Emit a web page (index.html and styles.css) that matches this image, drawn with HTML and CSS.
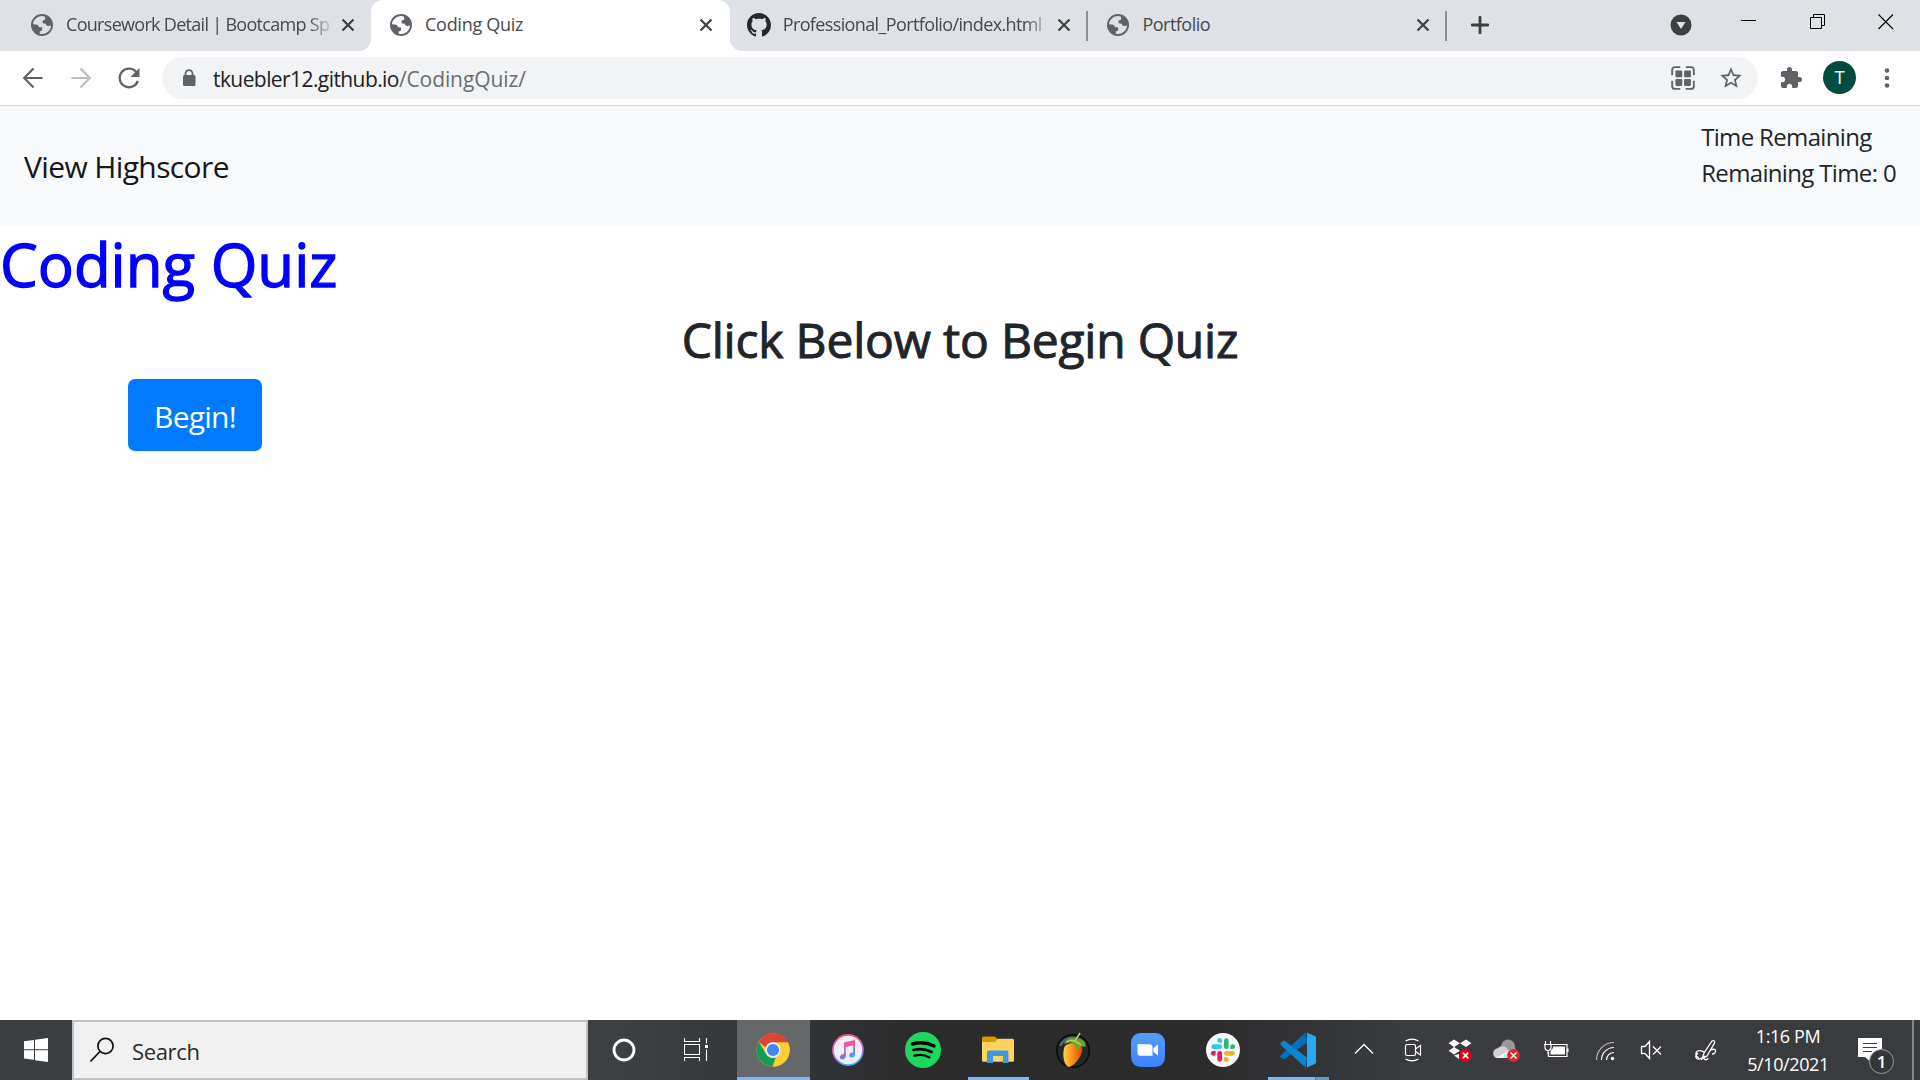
FILE: index.html
```html
<!DOCTYPE html>
<html lang="en">
<head>
<meta charset="utf-8">
<title>Coding Quiz</title>
<link rel="stylesheet" href="styles.css">
</head>
<body>
<svg class="defs" aria-hidden="true">
  <symbol id="globe" viewBox="0 0 24 24">
    <circle cx="12" cy="12" r="11" fill="#5f6368"/>
    <path fill="var(--tab-bg)" d="M11 3.200C6.600 3.700 3.200 7 3 11.300L6 11.600c1.800.1 2.600.9 2.800 2.300l3.400.5-.1 3.200-2.300.8v2.400c5.300 1.500 11-2.500 11.200-8.200l-2.600.4c-1.700.1-2.400-.9-2.800-2.400-1.700.2-3-.3-3.200-1.900.1-1.400 1.200-1.900 2.700-2V3.700C13.700 3.200 12.500 3 11 3.200z"/>
  </symbol>
  <symbol id="cross" viewBox="0 0 14 14"><path d="M1.500 1.500l11 11M12.500 1.500l-11 11" stroke="#3c4043" stroke-width="2.200"/></symbol>
</svg>

<header class="tabs">
  <div class="tab"><svg class="fav"><use href="#globe"/></svg><span class="title fade t-course">Coursework Detail | Bootcamp Sp</span><svg class="x"><use href="#cross"/></svg></div>
  <div class="tab active"><svg class="fav"><use href="#globe"/></svg><span class="title t-coding">Coding Quiz</span><svg class="x"><use href="#cross"/></svg></div>
  <div class="tab ruled"><svg class="fav" viewBox="0 0 16 16"><path fill="#24292e" d="M8 0C3.580 0 0 3.580 0 8c0 3.540 2.290 6.530 5.470 7.590.4.070.55-.17.55-.38 0-.19-.01-.82-.01-1.490-2.010.37-2.530-.49-2.690-.94-.09-.23-.48-.94-.82-1.130-.28-.15-.68-.52-.01-.53.63-.01 1.080.58 1.230.82.720 1.210 1.870.87 2.330.66.070-.52.280-.87.510-1.070-1.780-.2-3.640-.89-3.640-3.950 0-.87.310-1.590.820-2.150-.08-.2-.36-1.020.080-2.120 0 0 .67-.21 2.200.82.640-.18 1.320-.27 2-.27s1.360.09 2 .27c1.530-1.040 2.200-.82 2.200-.82.440 1.100.160 1.920.080 2.120.510.560.820 1.270.820 2.150 0 3.070-1.870 3.750-3.650 3.950.290.250.540.730.540 1.480 0 1.070-.01 1.930-.01 2.200 0 .21.150.460.550.380A8.010 8.010 0 0 0 16 8c0-4.420-3.580-8-8-8z"/></svg><span class="title fade t-prof">Professional_Portfolio/index.html</span><svg class="x"><use href="#cross"/></svg></div>
  <div class="tab ruled"><svg class="fav"><use href="#globe"/></svg><span class="title t-port">Portfolio</span><svg class="x"><use href="#cross"/></svg></div>
  <svg class="plus" viewBox="0 0 18 18"><path d="M9 1v16M1 9h16" stroke="#3c4043" stroke-width="2.800" stroke-linecap="round"/></svg>
  <div class="window-controls">
    <svg class="search-tabs" viewBox="0 0 22 22"><circle cx="11" cy="11" r="10.500" fill="#3c4043"/><path d="M6.500 8h9L11 15z" fill="#dee1e6"/></svg>
    <svg class="wc" viewBox="0 0 16 16"><path d="M0 6.500h15" stroke="#000"/></svg>
    <svg class="wc" viewBox="0 0 16 16"><path d="M.5 3.500h11v11H.5zM3.500 3.500v-3h11v11h-3" fill="none" stroke="#000"/></svg>
    <svg class="wc" viewBox="0 0 16 16"><path d="M.5.5l14.500 14.500M15 .5L.5 15" stroke="#000" stroke-width="1.100"/></svg>
  </div>
</header>

<nav class="toolbar">
  <svg class="nav" viewBox="0 0 24 24"><path d="M21.500 12H3.500M12.500 2.500L3.200 12l9.300 9.500" fill="none" stroke="#5f6368" stroke-width="2.200"/></svg>
  <svg class="nav" viewBox="0 0 24 24"><path d="M2.500 12h18M11.500 2.500l9.300 9.500-9.300 9.500" fill="none" stroke="#babcbe" stroke-width="2.200"/></svg>
  <svg class="nav" viewBox="0 0 24 24"><path d="M19.800 6.800A9.300 9.300 0 1 0 20.800 15" fill="none" stroke="#5f6368" stroke-width="2.300"/><path d="M22.500 2v9h-9z" fill="#5f6368"/></svg>
  <div class="omnibox">
    <svg class="lock" viewBox="0 0 14 18"><path d="M3.500 7V4.600a3.500 3.500 0 0 1 7 0V7" fill="none" stroke="#5f6368" stroke-width="1.800"/><rect x="1" y="6" width="12.500" height="11" rx="1.500" fill="#5f6368"/></svg>
    <span class="url">tkuebler12.github.io<span>/CodingQuiz/</span></span>
    <svg class="qr" viewBox="0 0 24 24"><path d="M9.500 2H4.500A2.500 2.500 0 0 0 2 4.500v5M14.500 2h5A2.500 2.500 0 0 1 22 4.500v5M9.500 22h-5A2.500 2.500 0 0 1 2 19.500v-5M14.500 22h5a2.500 2.500 0 0 0 2.500-2.500v-5" fill="none" stroke="#5f6368" stroke-width="1.700"/><g fill="#5f6368"><rect x="5" y="5" width="6.300" height="6.300" rx="1"/><rect x="13" y="5" width="6.300" height="6.300" rx="1"/><rect x="5" y="13" width="6.300" height="6.300" rx="1"/><rect x="13" y="13" width="6.300" height="6.300" rx="1"/></g></svg>
    <svg class="star" viewBox="0 0 24 24"><path fill="#5f6368" d="M22 9.240l-7.190-.62L12 2 9.190 8.630 2 9.240l5.460 4.730L5.820 21 12 17.270 18.180 21l-1.630-7.030L22 9.240zM12 15.400l-3.760 2.270 1-4.280-3.320-2.880 4.380-.38L12 6.100l1.710 4.040 4.380.38-3.320 2.880 1 4.280L12 15.400z"/></svg>
  </div>
  <svg class="puzzle" viewBox="0 0 24 24"><path fill="#5f6368" d="M20.500 11H19V7c0-1.100-.9-2-2-2h-4V3.500a2.500 2.500 0 0 0-5 0V5H4c-1.100 0-1.990.9-1.990 2v3.800H3.500c1.490 0 2.700 1.210 2.700 2.700s-1.210 2.700-2.700 2.700H2V20c0 1.100.9 2 2 2h3.800v-1.500c0-1.490 1.210-2.700 2.700-2.700s2.700 1.210 2.700 2.700V22H17c1.100 0 2-.9 2-2v-4h1.500a2.500 2.500 0 0 0 0-5z"/></svg>
  <span class="avatar">T</span>
  <svg class="dots" viewBox="0 0 6 22"><g fill="#5f6368"><circle cx="3" cy="3.500" r="2.300"/><circle cx="3" cy="11" r="2.300"/><circle cx="3" cy="18.500" r="2.300"/></g></svg>
</nav>

<main>
  <section class="navbar">
    <a class="brand">View Highscore</a>
    <div class="timer"><div>Time Remaining</div><div>Remaining Time: 0</div></div>
  </section>
  <h1>Coding Quiz</h1>
  <h2>Click Below to Begin Quiz</h2>
  <button class="begin">Begin!</button>
</main>

<footer class="taskbar">
  <div class="start"><svg width="24" height="24" viewBox="0 0 24 24"><path fill="#fff" d="M0 3.300L10 1.900V11.300H0zM11 1.700L24 0v11.300H11zM0 12.300h10v9.500L0 20.500zM11 12.300h13V24l-13-1.800z"/></svg></div>
  <div class="search"><svg width="26" height="26" viewBox="0 0 26 26"><g fill="none" stroke="#111" stroke-width="1.700"><circle cx="15.500" cy="9" r="7.600"/><path d="M10 14.500L.5 24.500"/></g></svg><span class="search-label">Search</span></div>
  <div class="sys"><svg width="24" height="24" viewBox="0 0 24 24"><circle cx="12" cy="12" r="10" fill="none" stroke="#fff" stroke-width="2.800"/></svg></div>
  <div class="sys"><svg width="24" height="24" viewBox="0 0 24 24"><g fill="none" stroke="#fff" stroke-width="1.100"><path d="M.5 0v3.500h15V0M.5 6.500h15v10H.5zM.5 23v-3.500h15V23M22.500 0v5.500M22.500 11.500V23"/></g><path fill="#fff" d="M21 7h3v3h-3z"/></svg></div>
  <div class="apps">
    <div class="app on"><svg width="34" height="34" viewBox="0 0 34 34"><circle cx="17" cy="17" r="16.500" fill="#fc3"/><path fill="#db4437" d="M2.700 8.800A16.500 16.500 0 0 1 32 9.500H17a7.500 7.500 0 0 0-7 5z"/><path fill="#fc3" d="M17 9.500h15A16.500 16.500 0 0 1 16.500 33.500l7-12.800z"/><path fill="#0f9d58" d="M2.700 8.800l7.600 12.500a7.800 7.800 0 0 0 9.500 3.200l-3.300 9A16.500 16.500 0 0 1 2.700 8.800z"/><circle cx="17" cy="17" r="7.700" fill="#f1f1f1"/><circle cx="17" cy="17" r="6.100" fill="#4285f4"/></svg></div>
    <div class="app"><svg width="32" height="32" viewBox="0 0 32 32"><defs><linearGradient id="it" x1=".2" y1="0" x2=".6" y2="1"><stop offset="0" stop-color="#ff4b5c"/><stop offset=".45" stop-color="#e05ad0"/><stop offset=".75" stop-color="#7a6cf5"/><stop offset="1" stop-color="#2cc8f8"/></linearGradient></defs><circle cx="16" cy="16" r="15.900" fill="url(#it)"/><circle cx="16" cy="16" r="14.300" fill="#f0eff4"/><path fill="url(#it)" d="M12 8.500L23 6v14.500c0 2-1.500 3.300-3.200 3.300-3.700 0-3.200-4.600 0-5l1.400-.4V11.500l-7.400 1.600v9c0 2-1.500 3.400-3.200 3.400-3.700 0-3.200-4.800 0-5.200l1.400-.3z"/></svg></div>
    <div class="app"><svg width="36" height="36" viewBox="0 0 36 36"><circle cx="18" cy="18" r="18" fill="#1ed760"/><g fill="none" stroke="#000" stroke-linecap="round"><path d="M7.500 12c7-2 15-1.300 21.500 2" stroke-width="3.400"/><path d="M8.600 18c6-1.600 12.500-1 18 1.900" stroke-width="2.800"/><path d="M9.500 23.700c5-1.300 10.500-.8 15 1.700" stroke-width="2.300"/></g></svg></div>
    <div class="app open"><svg width="32" height="28" viewBox="0 0 32 28"><path fill="#d99a00" d="M0 2a1.500 1.500 0 0 1 1.500-1.500H13L15.500 3H30v6H0z"/><path fill="#ffd45e" d="M0 6h13l3-3.200h14.500A1.500 1.500 0 0 1 32 4.300v20a1.500 1.500 0 0 1-1.500 1.500h-29A1.500 1.500 0 0 1 0 24.300z"/><path fill="#3d9ae0" d="M5 16.200a1.700 1.700 0 0 1 1.700-1.700h18a1.700 1.700 0 0 1 1.700 1.700V27H21v-7H11v7H5z"/></svg></div>
    <div class="app"><svg width="36" height="36" viewBox="0 0 36 36"><circle cx="18" cy="19" r="16.300" fill="#23282b" stroke="#080a0b" stroke-width="1.500"/><path d="M5 14a14.500 14.500 0 0 1 25-2" fill="none" stroke="#59636a" stroke-width="2.500"/><defs><linearGradient id="fl"><stop offset="0" stop-color="#ffd34d"/><stop offset=".4" stop-color="#ff9a20"/><stop offset="1" stop-color="#d94a08"/></linearGradient></defs><path fill="url(#fl)" d="M10 14c4-4 15-4 17 1 2 6-6 18-13 20-6-1-7-16-4-21z"/><path fill="#6ca536" d="M22 7C16 4 11 7 9 12c4-1 7-2 8-1l4 4 3 3 1-4 5 1c2-4-2-8-8-8z"/><path d="M20 9l5-8M12 10c4-3 9-1 14 3" fill="none" stroke="#b1d64f" stroke-width="1.600"/></svg></div>
    <div class="app"><svg width="34" height="34" viewBox="0 0 34 34"><defs><linearGradient id="zm" x2="0" y2="1"><stop offset="0" stop-color="#559dfb"/><stop offset="1" stop-color="#3f80fa"/></linearGradient></defs><rect width="34" height="34" rx="9.500" fill="url(#zm)"/><path fill="#fff" d="M6.500 11.300h12a3 3 0 0 1 3 3v8.400h-12a3 3 0 0 1-3-3zM22.500 15l4.500-3.500v11L22.500 19z"/></svg></div>
    <div class="app"><svg width="34" height="34" viewBox="0 0 34 34"><circle cx="17" cy="17" r="17" fill="#f8f8f8"/><g stroke-width="4.700" stroke-linecap="round"><path d="M7.700 13.700h6" stroke="#36c5f0"/><path d="M20.300 7.700v6" stroke="#2eb67d"/><path d="M20.300 20.300h6" stroke="#ecb22e"/><path d="M13.700 20.300v6" stroke="#e01e5a"/></g><path fill="#36c5f0" d="M16 9.700h-2.300a2.400 2.400 0 1 1 2.300-2.300z"/><path fill="#2eb67d" d="M24.300 16v-2.300a2.400 2.400 0 1 1 2.300 2.300z"/><path fill="#ecb22e" d="M18 24.300h2.300a2.400 2.400 0 1 1-2.300 2.300z"/><path fill="#e01e5a" d="M9.700 18v2.300A2.400 2.400 0 1 1 7.400 18z"/></svg></div>
    <div class="app open split"><svg width="36" height="36" viewBox="0 0 36 36"><path fill="#0070b8" d="M.8 23L25.500.6 27 10.500 5 27a1.700 1.700 0 0 1-2 0L.8 25.200a1.500 1.500 0 0 1 0-2.200z"/><path fill="#0b86d0" d="M5 9L27 25.500l-1.500 9.900L.8 13a1.500 1.500 0 0 1 0-2.200L3 9a1.700 1.700 0 0 1 2 0z"/><path fill="#29a8f4" d="M26 .3L34.800 4A2 2 0 0 1 36 5.800v24.400a2 2 0 0 1-1.200 1.800L26 35.700c.8-.4 1-1 1-1.700V2c0-.7-.2-1.300-1-1.700z"/></svg></div>
  </div>
  <div class="tray">
    <svg viewBox="0 0 48 60"><path d="M15 33.500l9-9 9 9" fill="none" stroke="#fff" stroke-width="1.300"/></svg>
    <svg viewBox="0 0 48 60"><g fill="none" stroke="#fff" stroke-width="1.200"><rect x="17.500" y="24.500" width="10" height="11" rx="1.500"/><path d="M27.500 29l5-3.500v9.500l-5-3.500M17.500 21c4-2.300 9-2.300 13 0M17.500 39c4 2.300 9 2.300 13 0"/></g></svg>
    <svg viewBox="0 0 48 60"><path fill="#fff" d="M12.500 23.200l5.500-3.700 6 3.700-6 3.700zM24 23.200l6-3.700 5.500 3.700-5.500 3.700zM12.500 30.700l5.500-3.600 6 3.600-6 3.700zM18 35.500l5-1.500v5z"/><circle cx="29.500" cy="35.500" r="6.500" fill="#d9001b"/><path d="M26.700 32.700l5.600 5.600M32.300 32.700l-5.600 5.600" stroke="#fff" stroke-width="1.700"/></svg>
    <svg viewBox="0 0 48 60"><path fill="#999" d="M17 26a7 7 0 0 1 14 1l1 5h-9z"/><path fill="#d0d0d0" d="M12 38c-4-2-4-9 2-10 3-3 9-2 10 2 4 0 6 2 6 5l-5 3z"/><path fill="#f3f3f3" d="M12 37.500L24 31l3 7H15c-1 0-2 0-3-.5z"/><circle cx="29.500" cy="35.500" r="6.500" fill="#d42a34"/><path d="M26.500 32.500l6 6M32.500 32.500l-6 6" stroke="#fff" stroke-width="1.300"/></svg>
    <svg viewBox="0 0 48 60"><g fill="none" stroke="#fff" stroke-width="1.200"><path d="M20 24.500h15v12H16.500V32M13.500 21v3.500M18.500 21v3.500M16 30.500v4M12 24.500h8M13 25v2.500a3 3 0 0 0 6 0V25"/></g><path fill="#fff" d="M21 26.500h12v8H18.500V31L21 28zM35 28.500h1.500v3.500H35z"/></svg>
    <svg viewBox="0 0 48 60"><g fill="none" stroke="#fff" stroke-width="1.200"><path d="M16.500 40A17.500 17.500 0 0 1 34 22.500" stroke="#bbb"/><path d="M21.500 40A12.500 12.500 0 0 1 34 27.500M26.500 40a7.500 7.500 0 0 1 7.500-7.500"/></g><circle cx="32.500" cy="38.500" r="1.700" fill="#fff"/></svg>
    <svg viewBox="0 0 48 60"><path d="M13.500 26.500h3.500l4.500-5v17l-4.500-5h-3.500zM25 26.500l8 8M33 26.500l-8 8" fill="none" stroke="#fff" stroke-width="1.300"/></svg>
    <svg class="pen" viewBox="0 0 60 60"><path d="M26 39l2-6 8-12c2-1 3 0 2.500 2L31 36zM28 32c-8-4-11 3-5 6M32 38c-1 3-5 2-4-2M35 30c6-3 6 4 1 4M22 33c-4 3-2 7 2 6l5-3" fill="none" stroke="#fff" stroke-width="1.300"/></svg>
  </div>
  <div class="clock"><span>1:16 PM</span><span>5/10/2021</span></div>
  <div class="notif"><svg width="24" height="24" viewBox="0 0 24 24"><path fill="#fff" d="M0 0h24v19H12.500v5L7 19H0z"/><path d="M5 5.500h14M5 9.500h14M5 13.500h9" stroke="#3a3c3e" stroke-width="1.200"/></svg><span class="badge">1</span></div>
</footer>
</body>
</html>
```
FILE: styles.css
```css
* { box-sizing: border-box; }
body {
  margin: 0;
  width: 1920px;
  height: 1080px;
  display: flex;
  flex-direction: column;
  overflow: hidden;
  background: #fff;
  font-family: "Open Sans", "Noto Sans", sans-serif;
  font-size: 24px;
  line-height: 1.5;
  color: #212529;
}
svg { display: block; flex: none; }
.defs { width: 0; height: 0; position: absolute; }

.tabs { height: 51px; flex: none; display: flex; align-items: center; background: #dee1e6; }
.tab { --tab-bg: #dee1e6; width: 358.7px; height: 51px; padding: 0 17px 2px 18px; display: flex; align-items: center; background: #dee1e6; position: relative; }
.tab:first-child { width: 371px; padding-left: 30px; padding-right: 16px; border-radius: 0 0 12px 0; }
.tab.active { --tab-bg: #fff; background: #fff; border-radius: 12px 12px 0 0; }
.tab.active + .tab { border-radius: 0 0 0 12px; padding-left: 17px; }
.tabs::before { content: ""; position: absolute; z-index: 0; left: 359px; top: 39px; width: 383px; height: 12px; background: #fff; }
.tab.ruled::after { content: ""; position: absolute; right: 0; top: 11px; width: 2px; height: 30px; background: #8b8e93; }
.fav { width: 24px; height: 24px; }
.title { width: 266px; margin-left: 12px; font-size: 18px; line-height: 27px; color: #45494d; white-space: nowrap; }
.title.fade { -webkit-mask-image: linear-gradient(90deg, #000 91%, rgba(0, 0, 0, .1)); mask-image: linear-gradient(90deg, #000 91%, rgba(0, 0, 0, .1)); }
.t-course { letter-spacing: -.7px; }
.t-coding { letter-spacing: -.27px; }
.t-prof { letter-spacing: -.62px; }
.t-port { letter-spacing: -.5px; }
.x { width: 14px; height: 14px; margin-left: auto; }
.plus { width: 18px; height: 18px; margin: 0 0 2px 24px; }
.window-controls { margin-left: auto; display: flex; align-items: flex-start; height: 51px; padding-right: 26px; }
.search-tabs { width: 22px; height: 22px; margin: 14px 49px 0 0; }
.wc { width: 16px; height: 16px; margin-top: 14px; }
.wc + .wc { margin-left: 52.500px; }

.toolbar { height: 55px; flex: none; display: flex; align-items: center; padding-left: 21px; border-bottom: 1px solid #d5d7da; background: #fff; }
.nav { width: 24px; height: 24px; margin-right: 24px; }
.omnibox { width: 1596px; height: 42px; margin-left: -3px; padding: 0 14px 0 20px; border-radius: 21px; background: #f1f3f4; display: flex; align-items: center; }
.lock { width: 14px; height: 18px; }
.url { margin: 2px 0 0 17px; font-size: 21px; line-height: 30px; letter-spacing: -.58px; color: #202124; }
.url span { letter-spacing: -.1px; color: #6a6d71; }
.qr { width: 26px; height: 26px; margin-left: auto; }
.star { width: 26px; height: 26px; margin-left: 22px; }
.puzzle { width: 24px; height: 24px; margin-left: 21px; }
.avatar { width: 33px; height: 33px; margin: 0 0 1px 20px; border-radius: 50%; background: #004d40; color: #e6efed; font: 18px/33px Roboto, sans-serif; text-align: center; }
.dots { width: 6px; height: 22px; margin-left: 28px; }

main { flex: 1; }
.navbar { height: 120px; padding: 13px 24px; display: flex; justify-content: space-between; background: #f8f9fa; }
.timer { letter-spacing: -.65px; }
.brand { font-size: 30px; line-height: 45px; margin-top: 25px; letter-spacing: -.62px; color: #161718; }
h1, h2 { font-weight: 500; margin: 0 0 12px; }
h1 { padding-top: 3px; font-size: 60px; line-height: 69px; height: 72px; padding-top: 4px; color: #00f; -webkit-text-stroke: 1.300px #00f; }
h2 { padding-top: 2px; font-size: 48px; line-height: 55px; height: 57px; letter-spacing: -.2px; text-align: center; -webkit-text-stroke: 1px #212529; }
.begin { display: block; margin-left: 128px; width: 134px; height: 72px; padding: 2px 0 0; border: 0; border-radius: 7px; background: #007bff; color: #fff; font: 30px/45px "Open Sans", "Noto Sans", sans-serif; letter-spacing: -.75px; }

.taskbar { height: 60px; flex: none; display: flex; color: #fff; background: linear-gradient(90deg, #3b3f42 0, #3c4043 620px, #2b2b2c 920px, #2b2b2c 1200px, #393b3e 1400px, #393c3e); }
.start { width: 72px; display: flex; align-items: center; justify-content: center; }
.search { width: 516px; padding-left: 16px; border: 2px solid #c1c1c1; background: #f1f1f1; color: #2a2a2a; display: flex; align-items: center; gap: 16px; font-size: 22px; }
.search-label { margin-top: 2px; letter-spacing: -.35px; }
.sys { width: 72px; display: flex; align-items: center; justify-content: center; }
.apps { display: flex; margin-left: 3px; }
.app { width: 75px; display: flex; align-items: center; justify-content: center; position: relative; }
.app.on { background: linear-gradient(90deg, transparent 2px, #656769 2px); }
.app.on::after, .app.open::after { content: ""; position: absolute; bottom: 0; left: 8px; right: 6px; height: 3px; background: #76b9f5; }
.app.on::after { left: 2px; right: 0; }
.app.split::after { background: linear-gradient(90deg, #76b9f5 47px, #4c7ba3 47px 48px, #5f9bcd 48px); }
.tray { display: flex; margin-left: 5px; }
.tray svg { width: 48px; height: 60px; }
.tray .pen { width: 60px; }
.clock { width: 102px; display: flex; flex-direction: column; align-items: center; font-size: 18px; line-height: 28px; letter-spacing: -.4px; padding: 2px 0 0 2px; }
.notif { width: 76px; padding: 18px 0 0 20px; position: relative; border-right: 2px solid #858788; }
.badge { position: absolute; left: 31px; top: 29px; width: 25px; height: 25px; border: 1px solid #999; border-radius: 50%; background: #333638; font-size: 17px; font-weight: 600; line-height: 23px; text-align: center; }
```
